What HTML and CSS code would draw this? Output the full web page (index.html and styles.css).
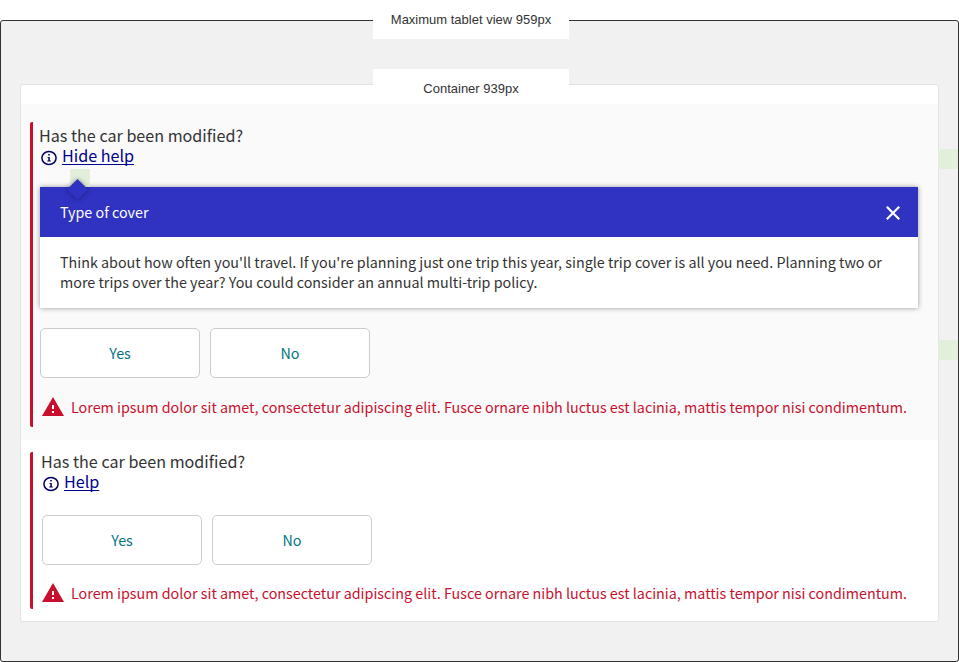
FILE: index.html
```html
<!DOCTYPE html>
<html lang="en">
<head>
<meta charset="utf-8">
<title>Question help, tablet</title>
<link rel="stylesheet" href="styles.css">
</head>
<body>
<main class="frame">
  <div class="tag tag-view">Maximum tablet view 959px</div>
  <div class="tag tag-container">Container 939px</div>
  <div class="marker marker-top"></div>
  <div class="marker marker-bottom"></div>
  <div class="card">
    <section class="panel panel-open">
      <div class="question">
        <div class="label">Has the car been modified?</div>
        <div class="help">
          <svg class="info" viewBox="0 0 16 16"><ellipse cx="8" cy="8" rx="7.1" ry="6.5" fill="none" stroke="#00005c" stroke-width="1.5"/><path d="M7.2 4h1.6v1.5H7.2zM6.4 6.9h2.4v3.6h1v.9H6.3v-.9h1V7.8h-.9z" fill="#00005c"/></svg>
          <a class="link" href="#">Hide help</a>
        </div>
        <div class="tip">
          <div class="spacer"></div>
          <div class="arrow"></div>
          <div class="tip-head"><span>Type of cover</span>
            <svg class="close" viewBox="0 0 16 16"><path d="M1.8 1.8 14.2 14.2M14.2 1.8 1.8 14.2" stroke="#fff" stroke-width="2.2"/></svg>
          </div>
          <p class="tip-body">Think about how often you'll travel. If you're planning just one trip this year, single trip cover is all you need. Planning two or<br>more trips over the year? You could consider an annual multi-trip policy.</p>
        </div>
        <div class="buttons"><button class="btn">Yes</button><button class="btn">No</button></div>
        <div class="error">
          <svg class="warn" viewBox="0 0 22 19"><path d="M11 0 22 19H0z" fill="#c8102e"/><path d="M10 8h2v4h-2zM10 14h2v2h-2z" fill="#fff"/></svg>
          <span>Lorem ipsum dolor sit amet, consectetur adipiscing elit. Fusce ornare nibh luctus est lacinia, mattis tempor nisi condimentum.</span>
        </div>
      </div>
    </section>
    <section class="panel panel-closed">
      <div class="question">
        <div class="label">Has the car been modified?</div>
        <div class="help">
          <svg class="info" viewBox="0 0 16 16"><ellipse cx="8" cy="8" rx="7.1" ry="6.5" fill="none" stroke="#00005c" stroke-width="1.5"/><path d="M7.2 4h1.6v1.5H7.2zM6.4 6.9h2.4v3.6h1v.9H6.3v-.9h1V7.8h-.9z" fill="#00005c"/></svg>
          <a class="link" href="#">Help</a>
        </div>
        <div class="buttons"><button class="btn">Yes</button><button class="btn">No</button></div>
        <div class="error">
          <svg class="warn" viewBox="0 0 22 19"><path d="M11 0 22 19H0z" fill="#c8102e"/><path d="M10 8h2v4h-2zM10 14h2v2h-2z" fill="#fff"/></svg>
          <span>Lorem ipsum dolor sit amet, consectetur adipiscing elit. Fusce ornare nibh luctus est lacinia, mattis tempor nisi condimentum.</span>
        </div>
      </div>
    </section>
  </div>
</main>
</body>
</html>
```
FILE: styles.css
```css
* { box-sizing: border-box; }
body {
  margin: 0;
  padding-top: 20px;
  background: #fff;
  color: #333;
  font-family: "Noto Sans CJK SC", "Noto Sans", sans-serif;
  font-size: 14.325px;
  line-height: 20px;
}
.frame {
  position: relative;
  height: 642px;
  padding: 63px 19px 0;
  background: #f1f1f1;
  border: 1px solid #333;
  border-radius: 3px;
}
.tag {
  position: absolute;
  left: 372px;
  width: 196px;
  background: #fff;
  font: 13px/20px "Liberation Sans", Arial, sans-serif;
  text-align: center;
  z-index: 1;
}
.tag-view { top: -11px; height: 29px; }
.tag-container { top: 48px; height: 35px; padding-top: 10px; }
.marker {
  position: absolute;
  right: 0;
  width: 20px;
  height: 20px;
  background: #e2efda;
}
.marker-top { top: 128px; }
.marker-bottom { top: 319px; }
.card {
  width: 919px;
  height: 538px;
  padding-top: 19px;
  background: #fff;
  border: 1px solid #e3e3e3;
  border-radius: 3px;
}
.panel-open { height: 336px; padding: 18px 0 0 9px; background: #fafafa; }
.panel-closed { padding: 12px 0 0 9px; }
.question { border-left: 3px solid #c8102e; border-radius: 2px; }
.panel-open .question { height: 305px; padding: 3px 0 0 6px; }
.panel-closed .question { height: 157px; padding-left: 8px; }
.panel-closed .label { margin-top: -1px; }
.panel-closed .question { display: flow-root; }
.label, .link { font-size: 16.14px; }
.help { display: flex; gap: 5px; padding-left: 2px; height: 20px; }
.info { flex: none; width: 16px; height: 16px; margin-top: 5px; }
.link {
  color: #00008f;
  text-underline-offset: 2px;
  text-decoration-thickness: 1px;
  text-decoration-skip-ink: none;
}
.tip {
  position: relative;
  width: 878px;
  height: 121px;
  margin: 22px 0 0 1px;
  background: #fff;
  box-shadow: 0 0 5px rgba(0, 0, 0, .4);
}
.spacer {
  position: absolute;
  left: 30px;
  top: -18px;
  width: 20px;
  height: 18px;
  background: #e2efda;
}
.arrow {
  position: absolute;
  left: 30px;
  top: -5px;
  width: 15px;
  height: 15px;
  background: #3032c1;
  box-shadow: 0 0 5px rgba(0, 0, 0, .4);
  transform: rotate(45deg);
}
.tip-head {
  display: flex;
  align-items: center;
  justify-content: space-between;
  height: 50px;
  padding: 0 17.5px 0 20px;
  background: #3032c1;
  color: #fff;
}
.close { width: 16px; height: 16px; margin-top: 2px; }
.tip-body { margin: 0; padding: 15px 0 0 20px; white-space: nowrap; }
.buttons { display: flex; gap: 10px; margin: 20px 0 0 1px; }
.panel-closed .buttons { margin-top: 24px; }
.btn {
  width: 160px;
  height: 50px;
  padding: 0;
  background: #fff;
  border: 1px solid #ccc;
  border-radius: 5px;
  color: #00757f;
  font: inherit;
}
.error {
  display: flex;
  gap: 7px;
  margin: 19px 0 0 3px;
  color: #c8102e;
  white-space: nowrap;
}
.panel-closed .error { margin: 18px 0 0 1px; }
.warn { flex: none; width: 22px; height: 19px; }
```
